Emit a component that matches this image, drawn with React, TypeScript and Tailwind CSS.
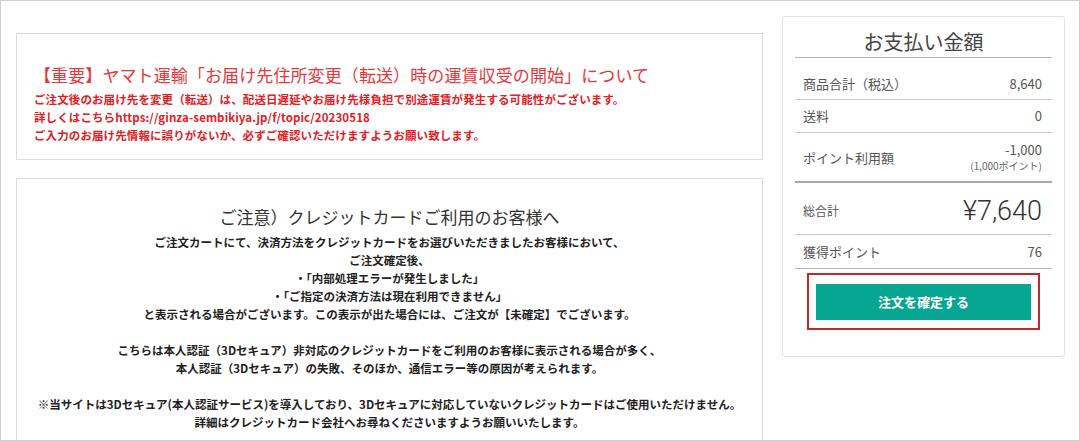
import React from "react";

const jp = { fontFamily: '"Noto Sans CJK JP", "Noto Sans", sans-serif' };

function Row({ label, value, className }: { label: string; value: React.ReactNode; className: string }) {
  return (
    <div className={`flex items-center justify-between pl-[8px] pr-[10px] ${className}`}>
      <span className="text-[13px] text-[#555]">{label}</span>
      <div className="text-right text-[13px] text-[#555]">{value}</div>
    </div>
  );
}

export default function App() {
  const warnLines = [
    "ご注文後のお届け先を変更（転送）は、配送日遅延やお届け先様負担で別途運賃が発生する可能性がございます。",
    "詳しくはこちらhttps://ginza-sembikiya.jp/f/topic/20230518",
    "ご入力のお届け先情報に誤りがないか、必ずご確認いただけますようお願い致します。",
  ];
  const noteLines = [
    "ご注文カートにて、決済方法をクレジットカードをお選びいただきましたお客様において、",
    "ご注文確定後、",
    "・「内部処理エラーが発生しました」",
    "・「ご指定の決済方法は現在利用できません」",
    "と表示される場合がございます。この表示が出た場合には、ご注文が【未確定】でございます。",
    "",
    "こちらは本人認証（3Dセキュア）非対応のクレジットカードをご利用のお客様に表示される場合が多く、",
    "本人認証（3Dセキュア）の失敗、そのほか、通信エラー等の原因が考えられます。",
    "",
    "※当サイトは3Dセキュア(本人認証サービス)を導入しており、3Dセキュアに対応していないクレジットカードはご使用いただけません。",
    "詳細はクレジットカード会社へお尋ねくださいますようお願いいたします。",
  ];

  return (
    <div style={jp} className="w-[1080px] h-[441px] overflow-hidden bg-white border border-[#cfcfcf] flex gap-[19px] pl-[15px] pt-[15px]">
      {/* left column */}
      <div className="w-[747px] shrink-0 pt-[17px] flex flex-col gap-[18px]">
        <div className="h-[127px] shrink-0 border border-[#dcdcdc] pl-[17px] pt-[29px]">
          <h2 className="text-[17px] leading-[24px] text-[#e8363b] tracking-[0.1px]">
            【重要】ヤマト運輸「お届け先住所変更（転送）時の運賃収受の開始」について
          </h2>
          <div className="mt-[3px]">
            {warnLines.map((l) => (
              <p key={l} className="text-[11.5px] leading-[18px] font-bold text-[#e3201f] tracking-[0.1px]">{l}</p>
            ))}
          </div>
        </div>

        <div className="h-[300px] shrink-0 border border-[#dcdcdc] pt-[26px] text-center">
          <h2 className="text-[17px] leading-[24px] text-[#333]">ご注意）クレジットカードご利用のお客様へ</h2>
          <div className="mt-[4px]">
            {noteLines.map((l, i) => (
              <p key={i} className="h-[18px] text-[11.5px] leading-[18px] font-bold text-[#222]">{l}</p>
            ))}
          </div>
        </div>
      </div>

      {/* right: payment summary */}
      <div className="w-[283px] h-[341px] shrink-0 border border-[#e2e2e2] rounded-[3px] px-[12px] pt-[10px]">
        <h3 className="h-[30px] leading-[30px] text-center text-[20px] text-[#444] border-b border-[#b5b5b5] box-content">
          お支払い金額
        </h3>
        <Row label="商品合計（税込）" value="8,640" className="h-[31px] pt-[10px] box-content border-b border-[#c8c8c8]" />
        <Row label="送料" value="0" className="h-[33px] border-b border-[#c8c8c8]" />
        <Row
          label="ポイント利用額"
          value={
            <>
              <div className="leading-[16px]">-1,000</div>
              <div className="text-[10px] leading-[16px] text-[#666]">(1,000ポイント)</div>
            </>
          }
          className="h-[50px] pt-[2px] border-b-2 border-[#a8a8a8]"
        />
        <div className="h-[52px] pt-[4px] flex items-center justify-between pl-[8px] pr-[10px] border-b border-[#c8c8c8]">
          <span className="text-[12px] text-[#555]">総合計</span>
          <span className="text-[27px] leading-[30px] text-[#333] font-light" style={{ fontFamily: 'Roboto, "Noto Sans", sans-serif' }}>
            ¥7,640
          </span>
        </div>
        <Row label="獲得ポイント" value="76" className="h-[34px] border-b border-[#b5b5b5]" />
        <div className="mt-[4px] mx-auto w-[233px] border-2 border-[#c0282a] pt-[9px] pb-[8px] px-[7px]">
          <button type="button" className="w-full h-[36px] bg-[#06a692] text-white text-[13px] font-bold">
            注文を確定する
          </button>
        </div>
      </div>
    </div>
  );
}
